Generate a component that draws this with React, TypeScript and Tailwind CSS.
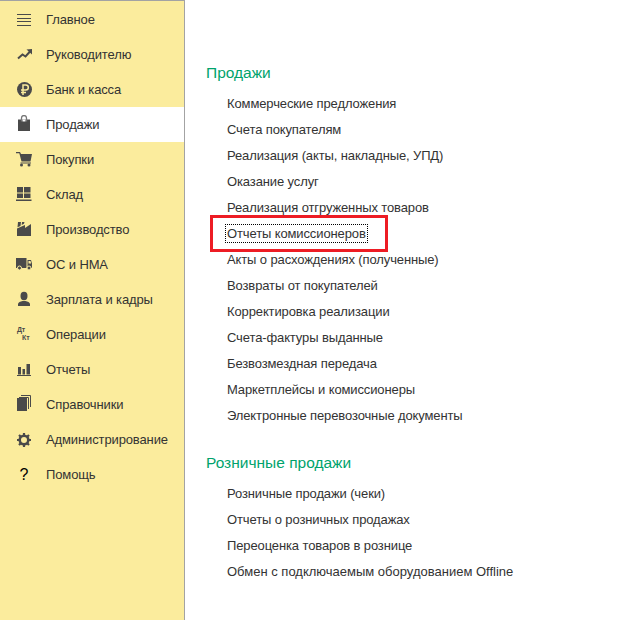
import React from "react";

const c = "#4a4a4a";
const bg = "#fbec9d";
const icons: Record<string, React.ReactNode> = {
  menu: <path d="M2 4.500h14M2 8.500h14M2 11.500h14M2 15.500h14" stroke={c} strokeWidth="1" />,
  trend: <g><path d="M3 13.500l4.500-4 3 2 4.500-5" stroke={c} strokeWidth="2" fill="none" /><path d="M11.500 4.500L17 4v5.500z" fill={c} /></g>,
  ruble: <g><circle cx="9.500" cy="9.500" r="7.500" fill={c} /><path d="M8 15V5h2.800a2.500 2.500 0 010 5H6M6 12.500h5" stroke={bg} strokeWidth="1.500" fill="none" /></g>,
  bag: <g><path d="M3 4.500h12v11.500H3z" fill={c} /><path d="M6.500 6.500V3a2.500 2.500 0 015 0v3.500" stroke="#777" strokeWidth="1.300" fill="none" /><path d="M7.500 4.500h3v2h-3z" fill="#fff" /></g>,
  cart: <g fill={c}><path d="M1 2h4l1 2h11l-1.500 7.500H6.500L4.300 3.300H1z" /><path d="M5.500 12.500h10.500v1H5.500z" /><circle cx="6.500" cy="15" r="1.500" /><circle cx="14" cy="15" r="1.500" /></g>,
  stock: <g fill={c}><path d="M2 2h6v5.500H2zM9 2h6.500v5.500H9zM2 8.500h6V13H2zM9 8.500h6.500V13H9zM1 14.500h15.500V16H1z" /></g>,
  factory: <g fill={c}><path d="M2 16V8.500l8-3.500v3l6-4v12z" /><path d="M3 2h3l-.5 4L2.500 7.300zM7 2h2.500L9 3.800 6.700 5z" /></g>,
  truck: <g fill={c}><path d="M1 3h10.500v10H1zM12.500 5H16l1 3.500V13h-4.500z" /><circle cx="4.500" cy="13" r="2" stroke={bg} /><circle cx="14" cy="13" r="2" stroke={bg} /><path d="M13.500 6H15.500l.6 2.500h-2.600z" fill={bg} /></g>,
  person: <g fill={c}><ellipse cx="9" cy="6" rx="3.500" ry="4.200" /><path d="M3 16v-2c0-1.700 2.500-2.500 4.500-3h3c2 .5 4.500 1.300 4.500 3v2z" /></g>,
  chart: <g fill={c}><path d="M3 7h3v7.500H3zM7.500 9H10v5.500H7.500zM11.500 4H15v10.500h-3.500zM2 15h14v1H2z" /></g>,
  book: <g><path d="M2 3h10v13H2z" fill={c} /><path d="M4 2.500h9.500V14M6 .500h9.500V12" stroke={c} strokeWidth="1" fill="none" /></g>,
  gear: <g><circle cx="9" cy="10" r="4.300" fill="none" stroke={c} strokeWidth="2.600" /><path d="M9 3v2.500M9 14.500V17M2 10h2.500M13.500 10H16M4 5l1.800 1.800M12.200 13.200L14 15M4 15l1.800-1.800M12.200 6.800L14 5" stroke={c} strokeWidth="2.200" /></g>,
};

const nav: [string, string][] = [
  ["menu", "Главное"], ["trend", "Руководителю"], ["ruble", "Банк и касса"], ["bag", "Продажи"],
  ["cart", "Покупки"], ["stock", "Склад"], ["factory", "Производство"], ["truck", "ОС и НМА"],
  ["person", "Зарплата и кадры"], ["dtkt", "Операции"], ["chart", "Отчеты"], ["book", "Справочники"],
  ["gear", "Администрирование"], ["help", "Помощь"],
];

const sales = ["Коммерческие предложения", "Счета покупателям", "Реализация (акты, накладные, УПД)", "Оказание услуг", "Реализация отгруженных товаров", "Отчеты комиссионеров", "Акты о расхождениях (полученные)", "Возвраты от покупателей", "Корректировка реализации", "Счета-фактуры выданные", "Безвозмездная передача", "Маркетплейсы и комиссионеры", "Электронные перевозочные документы"];
const retail = ["Розничные продажи (чеки)", "Отчеты о розничных продажах", "Переоценка товаров в рознице", "Обмен с подключаемым оборудованием Offline"];

function Icon({ k }: { k: string }) {
  if (k === "help") return <span className="h-[19px] w-[18px] text-center text-[16px] leading-[19px] text-black">?</span>;
  if (k === "dtkt")
    return (
      <span className="relative h-[19px] w-[18px] text-[7px] font-bold leading-none text-[#4a4a4a]">
        <span className="absolute left-[2px] top-[1px]">Дт</span>
        <span className="absolute left-[7px] top-[9px]">Кт</span>
      </span>
    );
  return <svg width="18" height="19" viewBox="0 0 18 19">{icons[k]}</svg>;
}

function Link({ t }: { t: string }) {
  const hl = t === "Отчеты комиссионеров";
  const wide = t.endsWith("Offline");
  return (
    <div className={`relative flex h-[26px] items-center pl-[42px] ${wide ? "tracking-normal" : ""}`}>
      {hl ? (
        <>
          <span className="mb-[2px] -ml-[2px] border border-dotted border-black px-px leading-[17px]">{t}</span>
          <span className="absolute left-[25px] top-[-6px] h-[37px] w-[178px] border-[3px] border-[#ed1c24]" />
        </>
      ) : t}
    </div>
  );
}

export default function App() {
  return (
    <div className="flex h-[620px] w-[638px] overflow-hidden bg-white font-['Liberation_Sans',Arial,sans-serif] text-[13px] tracking-[-0.12px] text-[#333]">
      <aside className="h-full w-[185px] shrink-0 border-r border-t border-[#a3a3a3] bg-[#fbec9d] pt-px">
        {nav.map(([k, t]) => (
          <div key={t} className={`flex h-[35px] items-center ${t === "Продажи" ? "bg-white" : ""}`}>
            <span className="flex w-[46px] justify-start pl-[15px]"><Icon k={k} /></span>
            <span>{t}</span>
          </div>
        ))}
      </aside>
      <main className="flex-1 pt-[64px]">
        <h2 className="ml-[21px] h-[18px] text-[15.5px] font-normal leading-[18px] tracking-normal text-[#00a36c]">Продажи</h2>
        <div className="mt-[9px]">{sales.map((t) => <Link key={t} t={t} />)}</div>
        <h2 className="ml-[21px] mt-[25px] h-[18px] text-[15.5px] font-normal leading-[18px] tracking-normal text-[#00a36c]">Розничные продажи</h2>
        <div className="mt-[9px]">{retail.map((t) => <Link key={t} t={t} />)}</div>
      </main>
    </div>
  );
}
